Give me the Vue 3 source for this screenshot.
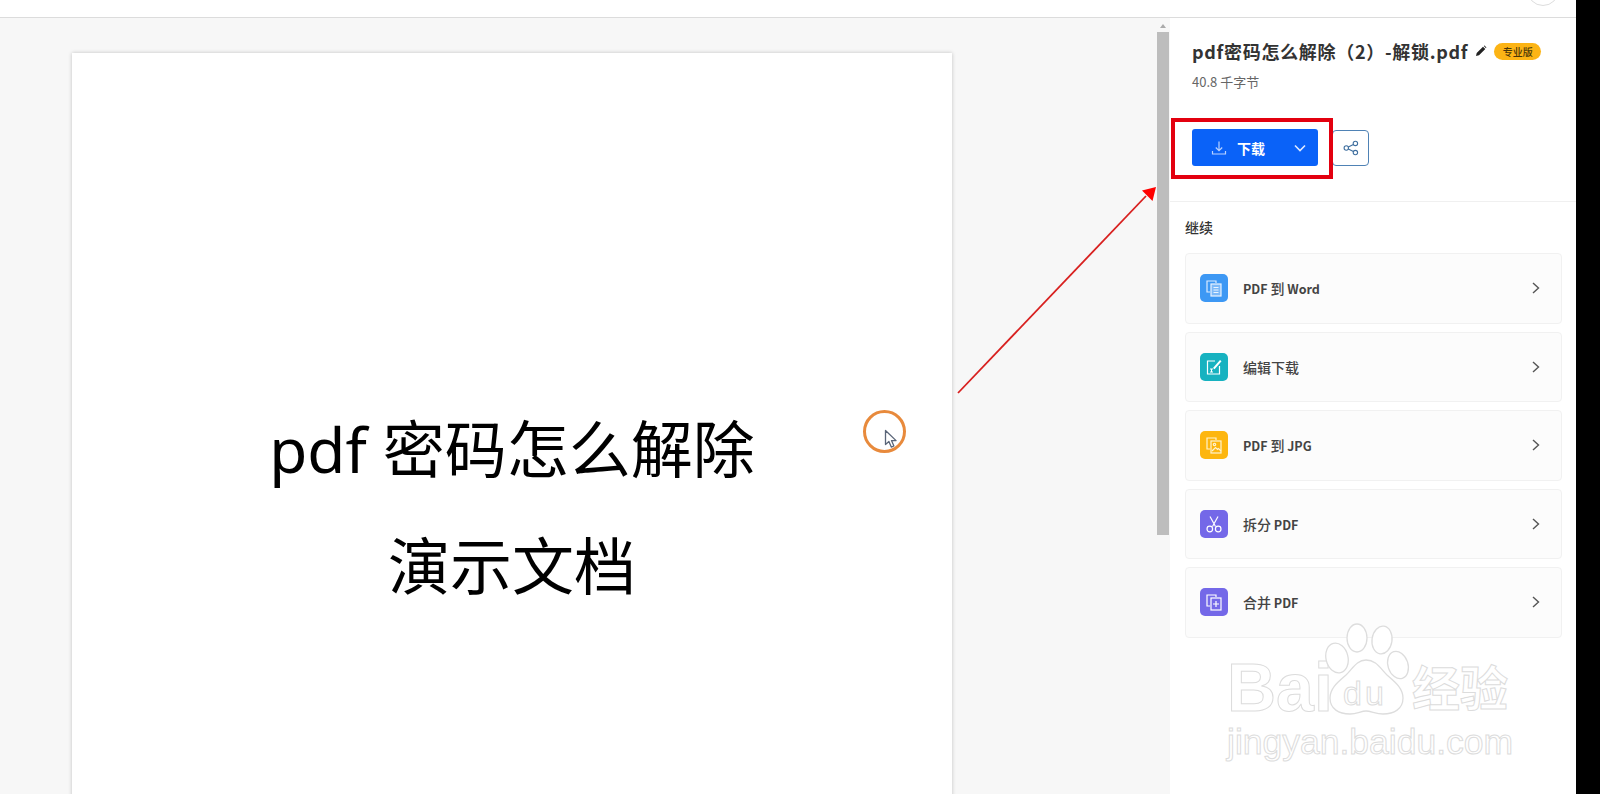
<script setup>
const actions = [
  { pre: 'PDF ', cn: '到', post: ' Word', color: '#3d98f4', icon: 'word' },
  { pre: '', cn: '编辑下载', post: '', color: '#17b2c0', icon: 'edit' },
  { pre: 'PDF ', cn: '到', post: ' JPG', color: '#fdb60f', icon: 'jpg' },
  { pre: '', cn: '拆分', post: ' PDF', color: '#7468e8', icon: 'split' },
  { pre: '', cn: '合并', post: ' PDF', color: '#7468e8', icon: 'merge' }
]
</script>

<template>
  <div class="app">
    <header class="topbar"><span class="avatar"></span></header>
    <main class="main">
      <section class="viewer">
        <article class="page">
          <p class="doc-line">pdf 密码怎么解除</p>
          <p class="doc-line">演示文档</p>
          <span class="click-ring"></span>
          <svg class="cursor" width="14" height="20" viewBox="0 0 14 20">
            <path d="M1.5 1.5v14l3.4-3 2.4 5.6 2.6-1.1-2.4-5.4h4.6z" fill="#fff" stroke="#5a6578" stroke-width="1.3" stroke-linejoin="round" />
          </svg>
        </article>
      </section>
      <div class="scrollbar">
        <span class="scroll-up"></span>
        <span class="scroll-thumb"></span>
      </div>
      <aside class="panel">
        <div class="file">
          <div class="title-row">
            <h1 class="title">pdf密码怎么解除（2）-解锁.pdf</h1>
            <svg class="pencil" width="12" height="12" viewBox="0 0 12 12">
              <path d="M1 11l.7-3L8 1.7 10.3 4 4 10.3zM8.8 1l.8-.4 1.8 1.8-.4.8z" fill="#222" />
            </svg>
            <span class="badge">专业版</span>
          </div>
          <div class="size">40.8 千字节</div>
          <div class="buttons">
            <button class="download">
              <svg width="16" height="16" viewBox="0 0 16 16" fill="none" stroke="#b9d2ff" stroke-width="1.2">
                <path d="M8 1.5v9M4.8 7.5L8 10.7l3.2-3.2M1.5 11v3h13v-3" />
              </svg>
              <span class="download-label">下载</span>
              <svg class="caret" width="14" height="14" viewBox="0 0 14 14" fill="none" stroke="#dfe9ff" stroke-width="1.6">
                <path d="M2 4.5l5 5 5-5" />
              </svg>
            </button>
            <button class="share">
              <svg width="16" height="16" viewBox="0 0 16 16" fill="none" stroke="#3f6f9f" stroke-width="1.1">
                <circle cx="3.3" cy="8" r="2.2" />
                <circle cx="12.4" cy="3.4" r="2.2" />
                <circle cx="12.4" cy="12.6" r="2.2" />
                <path d="M5.3 7l5.1-2.6M5.3 9l5.1 2.6" />
              </svg>
            </button>
            <span class="highlight"></span>
          </div>
        </div>
        <div class="continue">
          <h2 class="continue-title">继续</h2>
          <div class="cards">
            <div v-for="a in actions" :key="a.cn + a.post" class="card">
              <span class="card-icon" :style="{ background: a.color }">
                <svg width="20" height="20" viewBox="0 0 20 20" fill="none" stroke="#fff" stroke-width="1.2">
                  <template v-if="a.icon === 'word'">
                    <path d="M12 5V3H3v11h3" stroke="#dcecff" />
                    <rect x="7" y="6" width="10" height="12" fill="#7db9f8" stroke="#eaf4ff" />
                    <path d="M9.5 9.5h5M9.5 12h5M9.5 14.5h5" stroke="#eaf4ff" stroke-width="1" />
                  </template>
                  <template v-else-if="a.icon === 'edit'">
                    <path d="M11 4H3.5v13h12V9" />
                    <path d="M9 11l7-8 1.5 1.3-7 8z" fill="#fff" stroke="none" />
                    <path d="M6 12h3M7.5 12v3M6 15h3" stroke-width="1" />
                  </template>
                  <template v-else-if="a.icon === 'jpg'">
                    <path d="M12 5V3H3v11h3" stroke="#fff3cf" />
                    <rect x="7" y="6" width="10" height="12" stroke="#fff3cf" />
                    <circle cx="10.5" cy="9.5" r="1.2" stroke="#fff3cf" />
                    <path d="M8 16l3.5-3.5 2 2 1-1 2.5 2.5" stroke="#fff3cf" />
                  </template>
                  <template v-else-if="a.icon === 'split'">
                    <path d="M6 2.5l5.5 10M14 2.5l-5.5 10" />
                    <circle cx="5.8" cy="15" r="2.8" />
                    <circle cx="14.2" cy="15" r="2.8" />
                  </template>
                  <template v-else>
                    <path d="M12 5V3H3v11h3" />
                    <rect x="7" y="6" width="10" height="12" />
                    <path d="M12 9v6M9 12h6" />
                  </template>
                </svg>
              </span>
              <span class="card-label"><span class="latin">{{ a.pre }}</span>{{ a.cn }}<span class="latin">{{ a.post }}</span></span>
              <svg class="card-chevron" width="10" height="14" viewBox="0 0 10 14" fill="none" stroke="#555" stroke-width="1.4">
                <path d="M2 2l5.5 5L2 12" />
              </svg>
            </div>
          </div>
        </div>
      </aside>
    </main>

    <svg class="arrow" width="220" height="230" viewBox="0 0 220 230">
      <path d="M8 218L196 21" stroke="#d8201f" stroke-width="1.8" fill="none" />
      <path d="M206 12l-14 3.5 10.500 10.500z" fill="#f00" />
    </svg>

    <div class="watermark">
      <div class="wm-top">
        <span class="wm-big wm-bai">Bai</span>
        <span class="paw">
          <svg width="88" height="94" viewBox="0 0 88 94" fill="#fff" stroke="#ddd" stroke-width="1.3">
            <ellipse cx="12" cy="36" rx="11" ry="15" transform="rotate(-14 12 36)" />
            <ellipse cx="32" cy="16" rx="10" ry="14" />
            <ellipse cx="57" cy="18" rx="10" ry="14" transform="rotate(8 57 18)" />
            <ellipse cx="73" cy="43" rx="10" ry="14" transform="rotate(-18 73 43)" />
            <path d="M41 38c-9 0-13 8-20 15C13 60 5 66 5 76c0 11 9 16 20 16 7 0 11-3 16-3s10 3 17 3c11 0 20-5 20-16 0-10-8-16-16-23-7-7-11-15-21-15z" />
          </svg>
          <span class="wm-du">du</span>
        </span>
        <span class="wm-big wm-cn">经验</span>
      </div>
      <div class="wm-url">jingyan.baidu.com</div>
    </div>
  </div>
</template>

<style>
html, body { margin: 0; background: #000; }
</style>

<style scoped>
.app {
  position: relative;
  width: 1576px;
  height: 794px;
  overflow: hidden;
  background: #fff;
  font-family: "Noto Sans CJK SC", "Noto Sans", sans-serif;
  color: #333;
}
.topbar {
  position: relative;
  height: 17px;
  background: #fff;
  border-bottom: 1px solid #dcdcdc;
}
.avatar {
  position: absolute;
  left: 1527px;
  top: -26px;
  width: 30px;
  height: 30px;
  border: 1px solid #ddd;
  border-radius: 50%;
}
.main {
  display: flex;
  height: 776px;
}
.viewer {
  flex: 1;
  background: #f7f7f7;
  padding: 35px 0 0 72px;
  overflow: hidden;
}
.page {
  position: relative;
  width: 880px;
  height: 900px;
  padding-top: 338px;
  box-sizing: border-box;
  background: #fff;
  box-shadow: 0 0 4px rgba(0, 0, 0, 0.22);
  text-align: center;
}
.doc-line {
  margin: 0;
  height: 117px;
  line-height: 117px;
  font-size: 62px;
  color: #000;
  font-family: "Noto Sans", "Noto Sans CJK SC", sans-serif;
}
.click-ring {
  position: absolute;
  left: 791px;
  top: 357px;
  width: 37px;
  height: 37px;
  border: 3.5px solid #e88a3c;
  border-radius: 50%;
}
.cursor {
  position: absolute;
  left: 812px;
  top: 376px;
}
.scrollbar {
  position: relative;
  width: 13px;
  background: #f7f7f7;
}
.scroll-up {
  position: absolute;
  left: 3px;
  top: 6px;
  border: 3.5px solid transparent;
  border-top: 0;
  border-bottom: 4px solid #aaa;
}
.scroll-thumb {
  position: absolute;
  left: 0;
  top: 14px;
  width: 12px;
  height: 503px;
  background: #bdbdbd;
}
.panel {
  width: 406px;
  background: #fff;
}
.file {
  height: 184px;
  padding: 21px 0 0 22px;
  box-sizing: border-box;
  border-bottom: 1px solid #f0f0f0;
}
.title-row {
  display: flex;
  align-items: center;
  height: 24px;
}
.title {
  margin: 0;
  font-size: 18px;
  line-height: 24px;
  font-weight: 700;
  letter-spacing: 0.7px;
  color: #333;
  white-space: nowrap;
}
.pencil {
  margin-left: 7px;
}
.badge {
  margin-left: 7px;
  width: 47px;
  height: 17px;
  line-height: 17px;
  border-radius: 9px;
  background: #fcb415;
  color: #4a3608;
  font-size: 10px;
  font-weight: 500;
  text-align: center;
}
.size {
  margin-top: 9px;
  font-size: 13px;
  line-height: 20px;
  color: #666;
}
.buttons {
  position: relative;
  display: flex;
  align-items: center;
  gap: 14px;
  margin-top: 37px;
}
.download {
  display: flex;
  align-items: center;
  width: 126px;
  height: 37px;
  padding: 0 11px 0 19px;
  box-sizing: border-box;
  border: 0;
  border-radius: 3px;
  background: #0a62f8;
  font-family: inherit;
  color: #fff;
}
.download-label {
  margin-left: 10px;
  font-size: 14px;
  font-weight: 700;
}
.caret {
  margin-left: auto;
}
.share {
  display: flex;
  align-items: center;
  justify-content: center;
  width: 37px;
  height: 36px;
  padding: 0;
  box-sizing: border-box;
  border: 1px solid #4f82b5;
  border-radius: 4px;
  background: #fff;
}
.highlight {
  position: absolute;
  left: -21px;
  top: -11px;
  width: 162px;
  height: 61px;
  box-sizing: border-box;
  border: 4px solid #e3000f;
}
.continue {
  padding: 14px 15px 0;
}
.continue-title {
  margin: 0 0 15px;
  font-size: 14px;
  line-height: 22px;
  font-weight: 500;
  color: #333;
}
.cards {
  display: flex;
  flex-direction: column;
  gap: 8px;
}
.card {
  display: flex;
  align-items: center;
  width: 377px;
  height: 70.5px;
  padding: 0 20px 0 14px;
  box-sizing: border-box;
  border: 1px solid #f1f1f1;
  border-radius: 4px;
  background: #fcfcfc;
}
.card-icon {
  display: flex;
  align-items: center;
  justify-content: center;
  width: 28px;
  height: 28px;
  border-radius: 5px;
}
.card-label {
  margin-left: 15px;
  font-size: 14px;
  font-weight: 500;
  color: #444;
}
.latin {
  font-size: 12.5px;
  font-weight: 700;
  white-space: pre;
}
.card-chevron {
  margin-left: auto;
}
.arrow {
  position: absolute;
  left: 950px;
  top: 175px;
  pointer-events: none;
}
.watermark {
  position: absolute;
  left: 1227px;
  top: 622px;
  width: 292px;
  font-family: "Liberation Sans", sans-serif;
  color: #fff;
  -webkit-text-stroke: 1px #dcdcdc;
  pointer-events: none;
}
.wm-top {
  display: flex;
  align-items: flex-end;
  height: 92px;
}
.wm-big {
  font-weight: 700;
}
.wm-bai {
  width: 98px;
  font-size: 68px;
  line-height: 53px;
}
.wm-cn {
  font-family: "Noto Sans CJK SC", sans-serif;
  font-size: 48px;
  line-height: 58px;
  white-space: nowrap;
}
.paw {
  position: relative;
  display: block;
  width: 88px;
  height: 92px;
  margin-right: -1px;
}
.wm-du {
  position: absolute;
  left: 18px;
  top: 54px;
  font-size: 34px;
  line-height: 34px;
  letter-spacing: 3px;
}
.wm-url {
  margin-top: 8px;
  font-size: 35.5px;
  line-height: 40px;
  white-space: nowrap;
}
</style>
